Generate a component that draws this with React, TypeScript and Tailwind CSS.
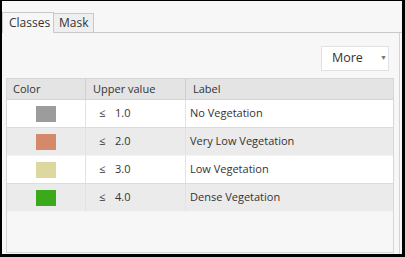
import React from 'react';

const rows = [
  { color: '#9c9c9c', value: '1.0', label: 'No Vegetation' },
  { color: '#d4896a', value: '2.0', label: 'Very Low Vegetation' },
  { color: '#dcd8a0', value: '3.0', label: 'Low Vegetation' },
  { color: '#3aa91b', value: '4.0', label: 'Dense Vegetation' },
];

export default function App() {
  return (
    <div
      className="w-[405px] h-[257px] bg-black pl-[2px] pr-[3px] pt-px pb-[3px] text-[#333]"
      style={{ fontFamily: '"Open Sans", "Noto Sans", sans-serif' }}
    >
      <div className="h-full bg-[#f7f7f7] flex flex-col">
        {/* TABS */}
        <div className="flex items-end pt-[11px] border-b border-[#c9c9c9] h-[32px]">
          <div className="h-[21px] w-[52px] pl-[6px] flex items-center bg-[#f7f7f7] border border-b-0 border-[#c9c9c9] text-[12px] -mb-px pb-px">
            Classes
          </div>
          <div className="h-[19px] w-[40px] pl-[5px] flex items-center bg-[#efefef] border border-l-0 border-b-0 border-[#c9c9c9] text-[12px]">
            Mask
          </div>
        </div>

        {/* PANEL */}
        <div className="flex-1 flex flex-col pl-[4px] pr-[5px] border-r border-[#d4d4d4] mr-[2px]">
          <div className="flex justify-end pt-[13px] pr-[5px]">
            <div className="w-[68px] h-[25px] bg-white border border-[#e2e2e2] flex items-center pl-[10px] text-[12.5px]">
              <span>More</span>
              <span className="ml-[17px] text-[7px] text-[#777]">▼</span>
            </div>
          </div>

          {/* TABLE */}
          <div className="mt-[7px] flex-1 border border-[#d6d6d6] bg-[#f7f7f7] mb-[1px] text-[11px]">
            <div className="flex h-[21px] bg-[#e4e4e4] border-b border-[#d4d4d4]">
              <div className="w-[79px] pl-[6px] flex items-center border-r border-[#d0d0d0]">Color</div>
              <div className="w-[100px] pl-[7px] flex items-center border-r border-[#d0d0d0]">Upper value</div>
              <div className="flex-1 pl-[7px] flex items-center">Label</div>
            </div>
            {rows.map((r, i) => (
              <div
                key={r.value}
                className={`flex h-[28px] border-b ${i % 2 === 0 ? 'bg-white border-[#dcdcdc]' : 'bg-[#ebebeb] border-[#f4f4f4]'}`}
              >
                <div className="w-[79px] flex items-center justify-center border-r border-[#e2e2e2]">
                  <div className="w-[20px] h-[16px]" style={{ background: r.color }} />
                </div>
                <div className="w-[100px] pl-[13px] flex items-center border-r border-[#e2e2e2]">
                  <span className="w-[16px]">≤</span>
                  <span>{r.value}</span>
                </div>
                <div className="flex-1 pl-[4px] flex items-center">{r.label}</div>
              </div>
            ))}
          </div>
        </div>
      </div>
    </div>
  );
}
